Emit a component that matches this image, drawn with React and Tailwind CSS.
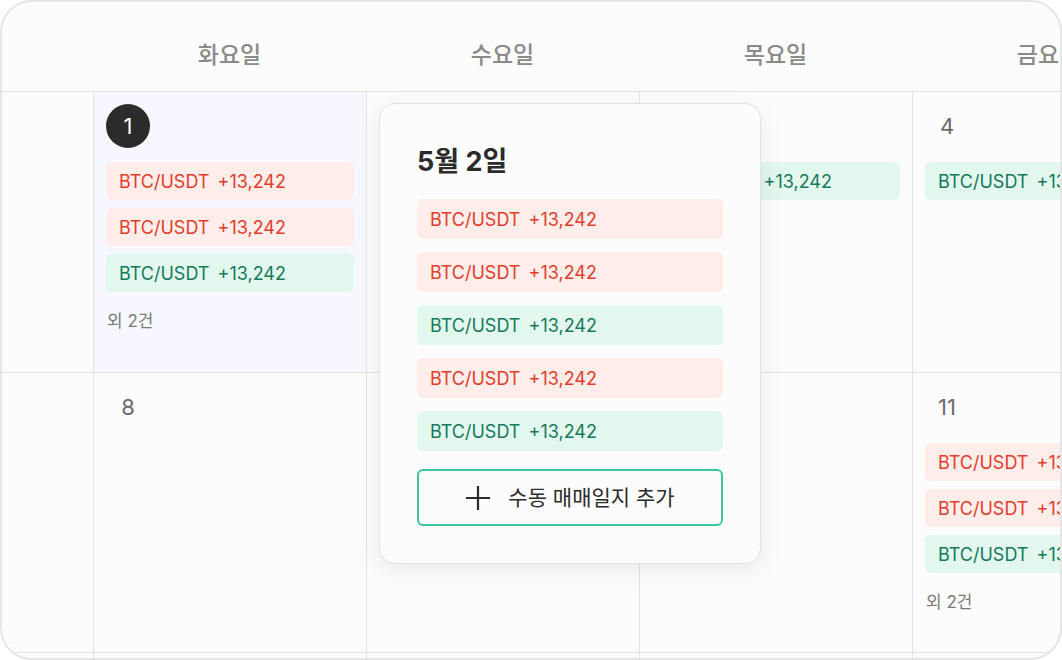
import React from "react";

const FONT = { fontFamily: '"Inter", "Noto Sans CJK KR", sans-serif' };

function Chip({ red, popup }) {
  return (
    <div
      className={
        (popup ? "h-[40px] px-[13px] rounded-[6px] " : "h-[38px] px-[13px] rounded-[6px] ") +
        "flex shrink-0 items-center gap-[8px] whitespace-nowrap text-[18px] " +
        (red ? "bg-[#ffedea] text-[#e23d2c]" : "bg-[#e2f8ef] text-[#17795a]")
      }
    >
      <span>BTC/USDT</span>
      <span>+13,242</span>
    </div>
  );
}

function DayNum({ n, today }) {
  if (today) {
    return (
      <div className="flex h-[44px] w-[44px] items-center justify-center rounded-full bg-[#2b2b2b] text-[22px] text-white">
        {n}
      </div>
    );
  }
  return (
    <div className="flex h-[44px] w-[44px] items-center justify-center text-[22px] text-[#6b6b6b]">
      {n}
    </div>
  );
}

function DayCell({ n, today, chips = [], more, bg }) {
  return (
    <div className={"flex flex-col border-l border-[#e4e4e4] p-[12px] " + (bg ? "bg-[#f7f7ff]" : "")}>
      <DayNum n={n} today={today} />
      {chips.length > 0 && (
        <div className="mt-[14px] flex flex-col gap-[8px]">
          {chips.map((c, i) => (
            <Chip key={i} red={c === "r"} />
          ))}
        </div>
      )}
      {more && <div className="mt-[17px] pl-[1px] text-[17px] text-[#7a7a7a]">{more}</div>}
    </div>
  );
}

export default function App() {
  const heads = ["", "화요일", "수요일", "목요일", "금요일"];
  return (
    <div className="h-[660px] w-[1062px] bg-white" style={FONT}>
      <div className="relative h-[660px] w-[1062px] overflow-hidden rounded-[32px] border-2 border-[#e6e6e6] bg-[#fcfcfc]">
        <div className="grid w-[1183px] grid-cols-[91px_273px_273px_273px_273px]">
          {/* header */}
          {heads.map((h, i) => (
            <div
              key={i}
              className="flex h-[90px] items-center justify-center border-b border-[#e4e4e4] pt-[17px] text-[23px] font-medium text-[#8a8a8a]"
            >
              {h}
            </div>
          ))}
          {/* row 1 */}
          <div className="h-[281px] border-b border-[#e4e4e4]" />
          <div className="h-[281px] border-b border-[#e4e4e4] grid">
            <DayCell n="1" today bg chips={["r", "r", "g"]} more="외 2건" />
          </div>
          <div className="h-[281px] border-b border-[#e4e4e4] grid">
            <DayCell n="2" chips={["r", "r", "g"]} more="외 2건" />
          </div>
          <div className="h-[281px] border-b border-[#e4e4e4] grid">
            <DayCell n="3" chips={["g"]} />
          </div>
          <div className="h-[281px] border-b border-[#e4e4e4] grid">
            <DayCell n="4" chips={["g"]} />
          </div>
          {/* row 2 */}
          <div className="h-[280px] border-b border-[#e4e4e4]" />
          <div className="h-[280px] border-b border-[#e4e4e4] grid">
            <DayCell n="8" />
          </div>
          <div className="h-[280px] border-b border-[#e4e4e4] grid">
            <DayCell n="9" />
          </div>
          <div className="h-[280px] border-b border-[#e4e4e4] grid">
            <DayCell n="10" />
          </div>
          <div className="h-[280px] border-b border-[#e4e4e4] grid">
            <DayCell n="11" chips={["r", "r", "g"]} more="외 2건" />
          </div>
          {/* row 3 */}
          <div className="h-[40px]" />
          <div className="h-[40px] border-l border-[#e4e4e4]" />
          <div className="h-[40px] border-l border-[#e4e4e4]" />
          <div className="h-[40px] border-l border-[#e4e4e4]" />
          <div className="h-[40px] border-l border-[#e4e4e4]" />
        </div>

        {/* popup */}
        <div className="absolute left-[377px] top-[101px] w-[382px] rounded-[16px] border border-[#e2e2e2] bg-[#fcfcfc] px-[37px] pb-[37px] pt-[40px] shadow-[0_6px_24px_rgba(0,0,0,0.08)]">
          <div className="text-[27px] font-bold leading-[36px] text-[#2b2b2b]">5월 2일</div>
          <div className="mt-[19px] flex flex-col gap-[13px]">
            <Chip popup red />
            <Chip popup red />
            <Chip popup />
            <Chip popup red />
            <Chip popup />
          </div>
          <button className="mt-[18px] flex h-[57px] w-full items-center justify-center gap-[17px] rounded-[6px] border-2 border-[#3cc59f] bg-[#fcfcfc] text-[21px] text-[#2b2b2b]">
            <svg width="26" height="26" viewBox="0 0 26 26" fill="none" stroke="#2b2b2b" strokeWidth="2.2">
              <path d="M13 1v24M1 13h24" />
            </svg>
            <span>수동 매매일지 추가</span>
          </button>
        </div>
      </div>
    </div>
  );
}
